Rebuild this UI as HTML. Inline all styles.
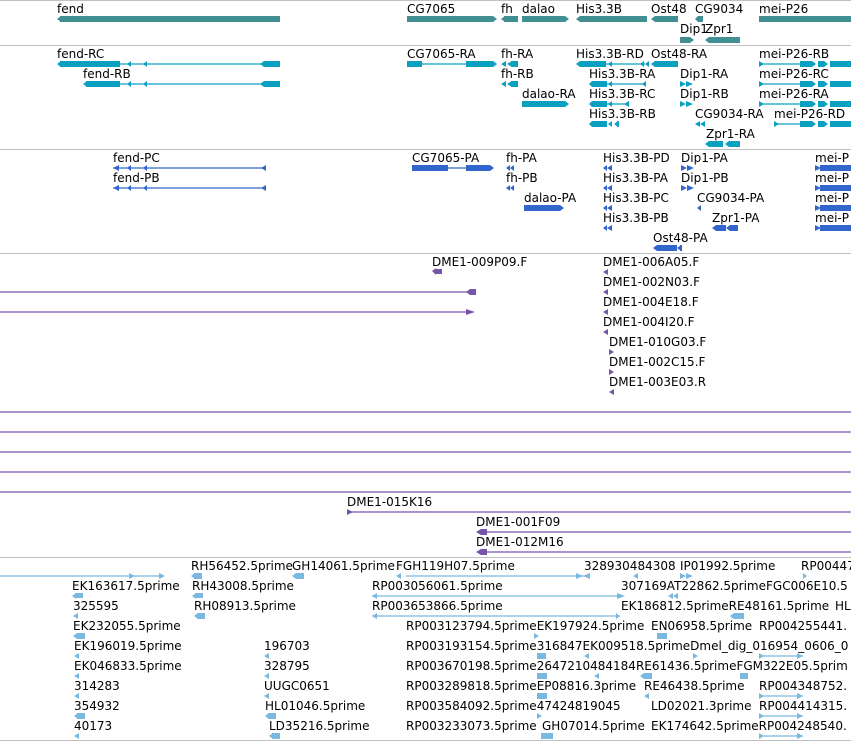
<!DOCTYPE html>
<html><head><meta charset="utf-8"><style>
html,body{margin:0;padding:0;background:#fff;width:851px;height:741px;overflow:hidden}
svg{display:block}
text{font-family:"DejaVu Sans","Liberation Sans",sans-serif;font-size:12px;fill:#000}
</style></head><body>
<svg width="851" height="741" viewBox="0 0 851 741" xmlns="http://www.w3.org/2000/svg">
<g stroke="#c0c0c0" stroke-width="1">
<line x1="0" y1="0.5" x2="851" y2="0.5"/><line x1="0" y1="45.5" x2="851" y2="45.5"/>
<line x1="0" y1="149.5" x2="851" y2="149.5"/><line x1="0" y1="253.5" x2="851" y2="253.5"/>
<line x1="0" y1="557.5" x2="851" y2="557.5"/><line x1="0" y1="740.5" x2="851" y2="740.5"/>
</g>
<!-- genes -->
<g fill="#418e93">
<rect x="60" y="16" width="220" height="6"/><polygon points="57,19 61,16 61,22"/>
<rect x="407" y="16" width="86" height="6"/><polygon points="493,16 497,19 493,22"/>
<rect x="504" y="16" width="14" height="6"/><polygon points="501,19 505,16 505,22"/>
<rect x="522" y="16" width="43" height="6"/><polygon points="565,16 569,19 565,22"/>
<rect x="580" y="16" width="67" height="6"/><polygon points="576,19 580,16 580,22"/>
<rect x="655" y="16" width="23" height="6"/><polygon points="651,19 655,16 655,22"/>
<rect x="698" y="16" width="5" height="6"/><polygon points="695,19 698,16 698,22"/>
<rect x="759" y="16" width="92" height="6"/>
<rect x="680" y="37" width="10" height="6"/><polygon points="690,37 694,40 690,43"/>
<rect x="709" y="37" width="31" height="6"/><polygon points="705,40 709,37 709,43"/>
</g>
<text x="57" y="13">fend</text><text x="407" y="13">CG7065</text><text x="501" y="13">fh</text><text x="522" y="13">dalao</text><text x="576" y="13">His3.3B</text><text x="651" y="13">Ost48</text><text x="695" y="13">CG9034</text><text x="759" y="13">mei-P26</text>
<text x="680" y="33">Dip1</text><text x="705" y="33">Zpr1</text>
<!-- transcripts -->
<g fill="#0aa0c0" stroke="#0aa0c0">
<g stroke="none">
<rect x="60" y="61" width="60" height="6"/><polygon points="57,64 61,61 61,67"/><rect x="264" y="61" width="16" height="6"/><polygon points="260,64 264,61 264,67"/>
<polygon points="127,64 131,61 131,67"/><polygon points="143,64 147,61 147,67"/>
<rect x="86" y="81" width="34" height="6"/><polygon points="83,84 87,81 87,87"/><rect x="264" y="81" width="16" height="6"/><polygon points="260,84 264,81 264,87"/>
<polygon points="127,84 131,81 131,87"/><polygon points="143,84 147,81 147,87"/>
<rect x="407" y="61" width="15" height="6"/><rect x="466" y="61" width="27" height="6"/><polygon points="493,61 497,64 493,67"/>
<polygon points="501,64 506,61 506,67"/><polygon points="507,64 512,61 512,67 "/><rect x="511" y="61" width="7" height="6"/>
<polygon points="501,84 506,81 506,87"/><polygon points="507,84 512,81 512,87 "/><rect x="511" y="81" width="7" height="6"/>
<rect x="522" y="101" width="43" height="6"/><polygon points="565,101 569,104 565,107"/>
<rect x="580" y="61" width="26" height="6"/><polygon points="576,64 580,61 580,67"/><polygon points="608,64 612,61 612,67"/><polygon points="640,64 644,61 644,67"/><polygon points="645,64 649,61 649,67"/>
<rect x="655" y="61" width="23" height="6"/><polygon points="651,64 655,61 655,67"/>
<rect x="592" y="81" width="15" height="6"/><polygon points="589,84 592,81 592,87"/><polygon points="608,84 612,81 612,87"/><polygon points="642,84 646,81 646,87"/>
<rect x="592" y="101" width="15" height="6"/><polygon points="589,104 592,101 592,107"/><polygon points="608,104 612,101 612,107"/><polygon points="624,104 629,101 629,107"/>
<rect x="592" y="121" width="15" height="6"/><polygon points="589,124 592,121 592,127"/><polygon points="608,124 612,121 612,127"/><polygon points="614,124 618,121 618,127"/><rect x="617" y="121" width="2" height="6"/>
<polygon points="680,81 686,84 680,87"/><polygon points="686,81 693,84 686,87"/>
<polygon points="680,101 686,104 680,107"/><polygon points="686,101 693,104 686,107"/>
<polygon points="695,124 700,121 700,127"/><polygon points="700,124 705,121 705,127"/>
<rect x="709" y="141" width="14" height="6"/><polygon points="705,144 709,141 709,147"/><polygon points="725,144 729,141 729,147"/><rect x="729" y="141" width="11" height="6"/>
<g>
<rect x="800" y="61" width="12" height="6"/><polygon points="812,61 816,64 812,67"/><rect x="818" y="61" width="6" height="6"/><polygon points="824,61 828,64 824,67"/><rect x="830" y="61" width="21" height="6"/><polygon points="759,61 764,64 759,67"/>
<rect x="800" y="81" width="12" height="6"/><polygon points="812,81 816,84 812,87"/><rect x="818" y="81" width="6" height="6"/><polygon points="824,81 828,84 824,87"/><rect x="830" y="81" width="21" height="6"/><polygon points="759,81 764,84 759,87"/>
<rect x="800" y="101" width="12" height="6"/><polygon points="812,101 816,104 812,107"/><rect x="818" y="101" width="6" height="6"/><polygon points="824,101 828,104 824,107"/><rect x="830" y="101" width="21" height="6"/><polygon points="759,101 764,104 759,107"/>
<rect x="800" y="121" width="12" height="6"/><polygon points="812,121 816,124 812,127"/><rect x="818" y="121" width="6" height="6"/><polygon points="824,121 828,124 824,127"/><rect x="830" y="121" width="21" height="6"/><polygon points="774,121 779,124 774,127"/>
</g></g>
<g stroke-width="1.2">
<line x1="120" y1="64" x2="264" y2="64"/><line x1="120" y1="84" x2="264" y2="84"/>
<line x1="422" y1="64" x2="466" y2="64"/>
<line x1="606" y1="64" x2="645" y2="64"/><line x1="607" y1="84" x2="645" y2="84"/><line x1="607" y1="104" x2="628" y2="104"/>
<line x1="759" y1="64" x2="800" y2="64"/><line x1="759" y1="84" x2="800" y2="84"/><line x1="759" y1="104" x2="800" y2="104"/><line x1="774" y1="124" x2="800" y2="124"/>
</g></g>
<text x="57" y="58">fend-RC</text><text x="407" y="58">CG7065-RA</text><text x="501" y="58">fh-RA</text><text x="576" y="58">His3.3B-RD</text><text x="651" y="58">Ost48-RA</text><text x="759" y="58">mei-P26-RB</text>
<text x="83" y="78">fend-RB</text><text x="501" y="78">fh-RB</text><text x="589" y="78">His3.3B-RA</text><text x="680" y="78">Dip1-RA</text><text x="759" y="78">mei-P26-RC</text>
<text x="522" y="98">dalao-RA</text><text x="589" y="98">His3.3B-RC</text><text x="680" y="98">Dip1-RB</text><text x="759" y="98">mei-P26-RA</text>
<text x="589" y="118">His3.3B-RB</text><text x="695" y="118">CG9034-RA</text><text x="774" y="118">mei-P26-RD</text>
<text x="706" y="138">Zpr1-RA</text>
<!-- proteins -->
<g fill="#3366cc" stroke="#3366cc">
<g stroke="none">
<polygon points="113,168 119,165 119,171"/><polygon points="127,168 131,165 131,171"/><polygon points="143,168 147,165 147,171"/><polygon points="261,168 266,165 266,171"/>
<polygon points="113,188 119,185 119,191"/><polygon points="127,188 131,185 131,191"/><polygon points="143,188 147,185 147,191"/><polygon points="261,188 266,185 266,191"/>
<rect x="412" y="165" width="36" height="6"/><rect x="466" y="165" width="24" height="6"/><polygon points="490,165 494,168 490,171"/>
<polygon points="506,168 510,165 510,171"/><polygon points="510,168 514,165 514,171"/><polygon points="506,188 510,185 510,191"/><polygon points="510,188 514,185 514,191"/>
<rect x="524" y="205" width="36" height="6"/><polygon points="560,205 564,208 560,211"/>
<polygon points="603,168 607,165 607,171"/><polygon points="607,168 612,165 612,171"/>
<polygon points="603,188 607,185 607,191"/><polygon points="607,188 612,185 612,191"/>
<polygon points="603,208 607,205 607,211"/><polygon points="607,208 612,205 612,211"/>
<polygon points="603,228 607,225 607,231"/><polygon points="607,228 612,225 612,231"/>
<polygon points="681,165 687,168 681,171"/><polygon points="687,165 694,168 687,171"/>
<polygon points="681,185 687,188 681,191"/><polygon points="687,185 694,188 687,191"/>
<polygon points="697,208 701,205 701,211"/>
<rect x="716" y="225" width="10" height="6"/><polygon points="712,228 716,225 716,231"/><polygon points="726,228 730,225 730,231"/><rect x="730" y="225" width="8" height="6"/>
<rect x="657" y="245" width="20" height="6"/><polygon points="653,248 657,245 657,251"/><polygon points="677,248 681,245 681,251"/><rect x="680" y="245" width="2" height="6"/>
<rect x="820" y="165" width="31" height="6"/><polygon points="815,165 821,168 815,171"/>
<rect x="820" y="185" width="31" height="6"/><polygon points="815,185 821,188 815,191"/>
<rect x="820" y="205" width="31" height="6"/><polygon points="815,205 821,208 815,211"/>
<rect x="820" y="225" width="31" height="6"/><polygon points="815,225 821,228 815,231"/>
</g>
<g stroke-width="1.2"><line x1="113" y1="168" x2="265" y2="168"/><line x1="113" y1="188" x2="265" y2="188"/><line x1="448" y1="168" x2="466" y2="168"/></g>
</g>
<text x="113" y="162">fend-PC</text><text x="412" y="162">CG7065-PA</text><text x="506" y="162">fh-PA</text><text x="603" y="162">His3.3B-PD</text><text x="681" y="162">Dip1-PA</text><text x="815" y="162">mei-P</text>
<text x="113" y="182">fend-PB</text><text x="506" y="182">fh-PB</text><text x="603" y="182">His3.3B-PA</text><text x="681" y="182">Dip1-PB</text><text x="815" y="182">mei-P</text>
<text x="524" y="202">dalao-PA</text><text x="603" y="202">His3.3B-PC</text><text x="697" y="202">CG9034-PA</text><text x="815" y="202">mei-P</text>
<text x="603" y="222">His3.3B-PB</text><text x="712" y="222">Zpr1-PA</text><text x="815" y="222">mei-P</text>
<text x="653" y="242">Ost48-PA</text>
<!-- DME -->
<g fill="#7755aa" stroke="#7755aa">
<g stroke="none">
<rect x="435" y="269" width="7" height="5"/><polygon points="432,271 436,268 436,275"/>
<rect x="470" y="289" width="6" height="6"/><polygon points="466,292 470,289 470,295"/>
<polygon points="466,309 475,312 466,315"/>
<polygon points="603,272 608,269 608,275"/><polygon points="603,292 608,289 608,295"/><polygon points="603,312 608,309 608,315"/><polygon points="603,332 608,329 608,335"/>
<polygon points="609,349 614,352 609,355"/><polygon points="609,369 614,372 609,375"/><polygon points="609,392 614,389 614,395"/>
<polygon points="347,509 353,512 347,515"/>
<polygon points="476,532 481,529 481,535"/><rect x="481" y="529" width="6" height="6"/>
<polygon points="476,552 481,549 481,555"/><rect x="481" y="549" width="6" height="6"/>
</g>
<g stroke-width="1.3">
<line x1="0" y1="292" x2="470" y2="292"/><line x1="0" y1="312" x2="470" y2="312"/>
<line x1="0" y1="412" x2="851" y2="412"/><line x1="0" y1="432" x2="851" y2="432"/><line x1="0" y1="452" x2="851" y2="452"/><line x1="0" y1="472" x2="851" y2="472"/><line x1="0" y1="492" x2="851" y2="492"/>
<line x1="347" y1="512" x2="851" y2="512"/><line x1="480" y1="532" x2="851" y2="532"/><line x1="480" y1="552" x2="851" y2="552"/>
</g></g>
<text x="432" y="266">DME1-009P09.F</text><text x="603" y="266">DME1-006A05.F</text><text x="603" y="286">DME1-002N03.F</text><text x="603" y="306">DME1-004E18.F</text><text x="603" y="326">DME1-004I20.F</text><text x="609" y="346">DME1-010G03.F</text><text x="609" y="366">DME1-002C15.F</text><text x="609" y="386">DME1-003E03.R</text>
<text x="347" y="506">DME1-015K16</text><text x="476" y="526">DME1-001F09</text><text x="476" y="546">DME1-012M16</text>
<!-- ESTs -->
<g fill="#7ab8e0" stroke="#7ab8e0">
<g stroke-width="1.2">
<line x1="0" y1="576" x2="163" y2="576"/><line x1="372" y1="596" x2="622" y2="596"/><line x1="372" y1="616" x2="620" y2="616"/><line x1="406" y1="576" x2="590" y2="576"/>
<line x1="759" y1="656" x2="803" y2="656"/><line x1="759" y1="696" x2="803" y2="696"/><line x1="759" y1="716" x2="803" y2="716"/><line x1="759" y1="736" x2="803" y2="736"/>
</g>
<g stroke="none">
<polygon points="129,573 135,576 129,579"/><polygon points="159,573 165,576 159,579"/>
<rect x="194" y="573" width="8" height="6"/><polygon points="191,576 195,573 195,579"/>
<rect x="296" y="573" width="8" height="6"/><polygon points="292,576 296,573 296,579"/>
<polygon points="396,576 401,573 401,579"/><polygon points="576,573 583,576 576,579"/><polygon points="583,576 590,573 590,579"/>
<polygon points="633,576 638,573 638,579"/><polygon points="680,573 686,576 680,579"/><polygon points="686,573 693,576 686,579"/><polygon points="803,573 807,576 803,579"/>
<rect x="75" y="593" width="8" height="5"/><polygon points="72,596 76,593 76,599"/>
<rect x="195" y="593" width="8" height="5"/><polygon points="192,596 196,593 196,599"/>
<polygon points="372,596 377,593 377,599"/><polygon points="617,593 625,596 617,599"/><polygon points="668,596 673,593 673,599"/><polygon points="673,596 678,593 678,599"/>
<polygon points="73,616 78,613 78,619"/><rect x="197" y="613" width="8" height="6"/><polygon points="194,616 198,613 198,619"/>
<polygon points="372,616 377,613 377,619"/><polygon points="616,613 620,616 616,619"/><rect x="734" y="613" width="10" height="6"/><polygon points="730,616 734,613 734,619"/>
<rect x="77" y="633" width="8" height="6"/><polygon points="73,636 77,633 77,639"/><polygon points="534,633 539,636 534,639"/><rect x="657" y="633" width="10" height="6"/>
<polygon points="759,653 764,656 759,659"/><polygon points="797,653 803,656 797,659"/>
<polygon points="74,656 79,653 79,659"/><polygon points="264,656 269,653 269,659"/><rect x="537" y="653" width="9" height="6"/><polygon points="584,656 589,653 589,659"/><polygon points="693,653 698,656 693,659"/>
<polygon points="74,676 79,673 79,679"/><polygon points="264,676 269,673 269,679"/><rect x="537" y="673" width="10" height="6"/><polygon points="594,676 599,673 599,679"/><rect x="644" y="673" width="8" height="6"/><polygon points="640,676 644,673 644,679"/><rect x="740" y="673" width="8" height="6"/>
<polygon points="74,696 79,693 79,699"/><polygon points="264,696 269,693 269,699"/><rect x="537" y="693" width="10" height="6"/><polygon points="644,696 649,693 649,699"/>
<polygon points="759,693 764,696 759,699"/><polygon points="797,693 803,696 797,699"/>
<rect x="77" y="713" width="8" height="6"/><polygon points="74,716 78,713 78,719"/><rect x="268" y="713" width="8" height="6"/><polygon points="265,716 269,713 269,719"/><polygon points="537,713 542,716 537,719"/>
<polygon points="759,713 764,716 759,719"/><polygon points="797,713 803,716 797,719"/>
<polygon points="74,736 79,733 79,739"/><rect x="272" y="733" width="8" height="6"/><polygon points="269,736 273,733 273,739"/><rect x="541" y="733" width="12" height="6"/>
<polygon points="759,733 764,736 759,739"/><polygon points="797,733 803,736 797,739"/>
</g></g>
<text x="191" y="570">RH56452.5prime</text><text x="292" y="570">GH14061.5prime</text><text x="396" y="570">FGH119H07.5prime</text><text x="584" y="570">328930484308</text><text x="680" y="570">IP01992.5prime</text><text x="801" y="570">RP00447</text>
<text x="72" y="590">EK163617.5prime</text><text x="192" y="590">RH43008.5prime</text><text x="372" y="590">RP003056061.5prime</text><text x="621" y="590">307169AT22862.5primeFGC006E10.5</text>
<text x="73" y="610">325595</text><text x="194" y="610">RH08913.5prime</text><text x="372" y="610">RP003653866.5prime</text><text x="621" y="610">EK186812.5primeRE48161.5prime</text><text x="835" y="610">HL</text>
<text x="73" y="630">EK232055.5prime</text><text x="406" y="630">RP003123794.5primeEK197924.5prime</text><text x="651" y="630">EN06958.5prime</text><text x="759" y="630">RP004255441.</text>
<text x="74" y="650">EK196019.5prime</text><text x="264" y="650">196703</text><text x="406" y="650">RP003193154.5prime316847EK009518.5primeDmel_dig_016954_0606_0</text>
<text x="74" y="670">EK046833.5prime</text><text x="264" y="670">328795</text><text x="406" y="670">RP003670198.5prime2647210484184RE61436.5primeFGM322E05.5prim</text>
<text x="74" y="690">314283</text><text x="264" y="690">UUGC0651</text><text x="406" y="690">RP003289818.5primeEP08816.3prime</text><text x="644" y="690">RE46438.5prime</text><text x="759" y="690">RP004348752.</text>
<text x="74" y="710">354932</text><text x="265" y="710">HL01046.5prime</text><text x="406" y="710">RP003584092.5prime47424819045</text><text x="651" y="710">LD02021.3prime</text><text x="759" y="710">RP004414315.</text>
<text x="74" y="730">40173</text><text x="269" y="730">LD35216.5prime</text><text x="406" y="730">RP003233073.5prime</text><text x="542" y="730">GH07014.5prime</text><text x="651" y="730">EK174642.5primeRP004248540.</text>
</svg>
</body></html>
